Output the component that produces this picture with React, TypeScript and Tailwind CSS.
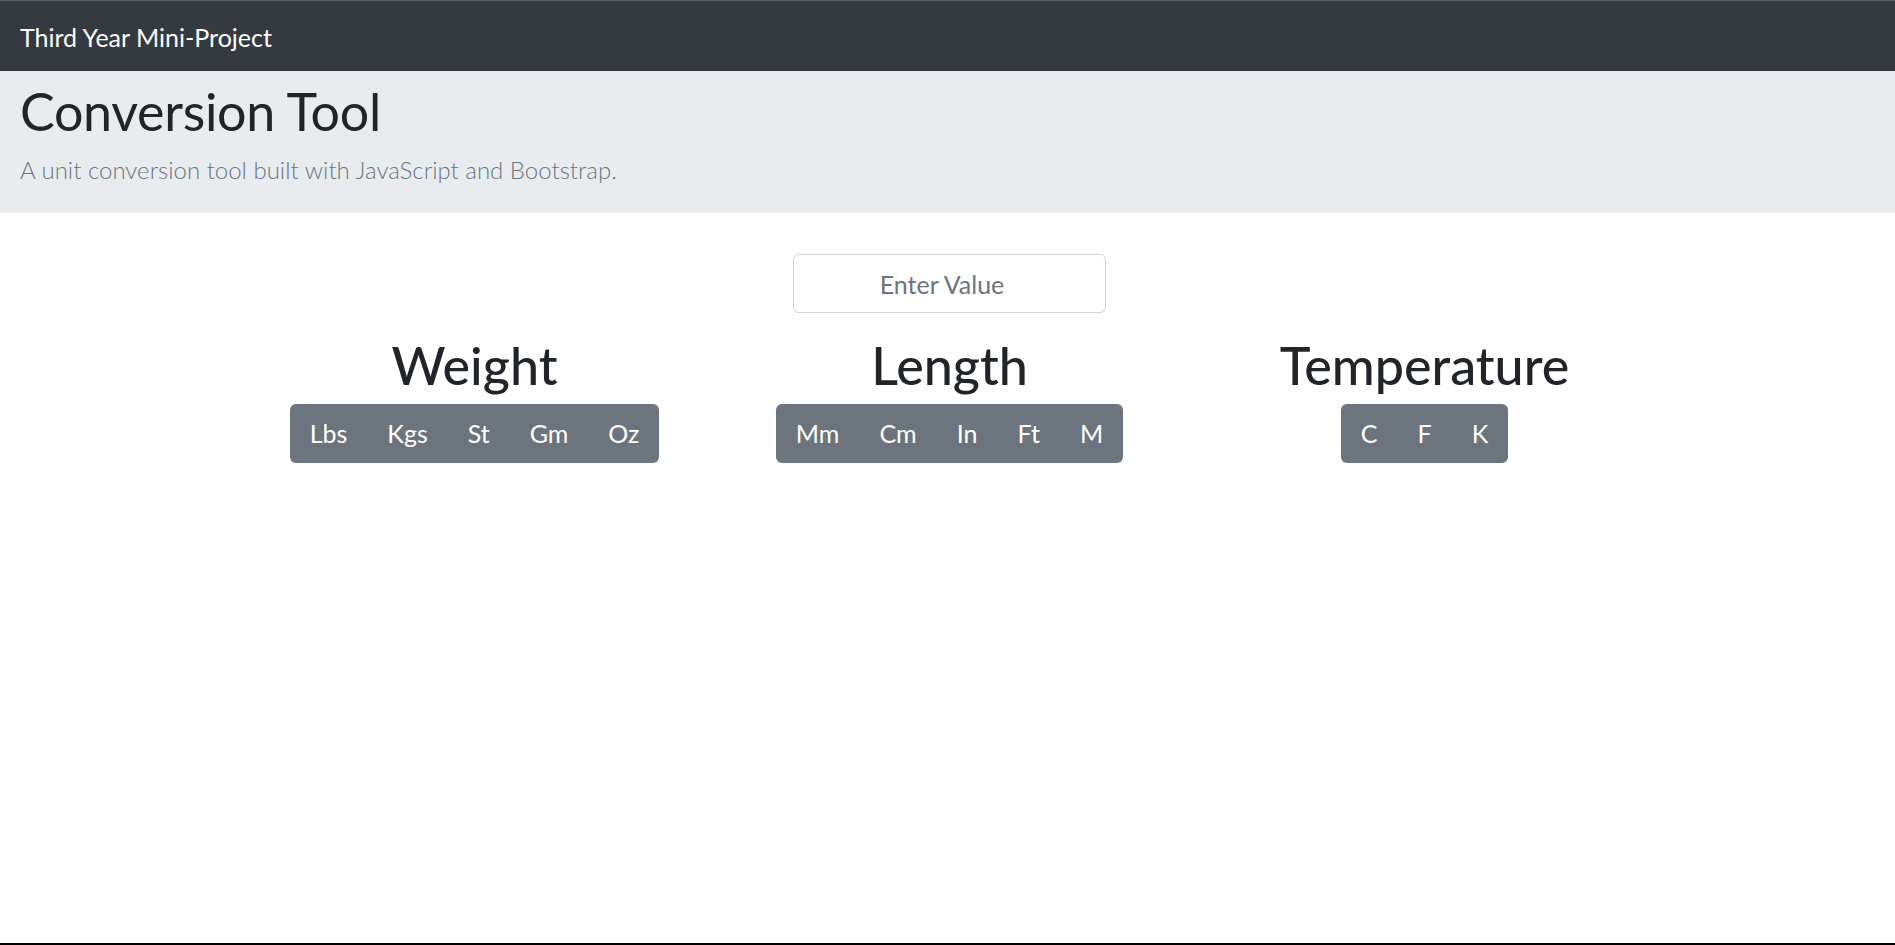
const weightUnits = ['Lbs', 'Kgs', 'St', 'Gm', 'Oz'];
const lengthUnits = ['Mm', 'Cm', 'In', 'Ft', 'M'];
const tempUnits = ['C', 'F', 'K'];

interface UnitGroupProps {
    title: string;
    units: string[];
}

function UnitGroup({ title, units }: UnitGroupProps) {
    return (
        <div className="flex flex-col items-center">
            <h1 className="text-[52px] leading-[1.2] font-medium text-[#212529] mb-[8px]">{title}</h1>
            <div className="flex rounded-[6px] overflow-hidden">
                {units.map((unit) => (
                    <button
                        key={unit}
                        className="h-[59px] px-[20px] flex items-center bg-[#6c757d] text-white text-[25px] leading-[1.5] cursor-pointer"
                    >
                        {unit}
                    </button>
                ))}
            </div>
        </div>
    );
}

export default function App() {
    return (
        <div className="h-[945px] flex flex-col bg-white font-['Lato',sans-serif]">
            {/* Navbar */}
            <nav className="h-[71px] shrink-0 flex items-center px-[20px] pt-[3px] bg-[#343a40] border-t border-[#575c62]">
                <span className="text-[25px] leading-[1.5] text-white">Third Year Mini-Project</span>
            </nav>

            {/* Jumbotron */}
            <header className="h-[142px] shrink-0 px-[20px] pt-[9px] bg-[#e9ecef]">
                <h1 className="text-[52px] leading-[1.2] tracking-[-0.3px] text-[#212529]">Conversion Tool</h1>
                <p className="mt-[10px] text-[24px] leading-[1.5] font-light text-[#6c757d]">
                    A unit conversion tool built with JavaScript and Bootstrap.
                </p>
            </header>

            {/* Converter */}
            <main className="flex-1 flex flex-col items-center pl-[4px]">
                <input
                    type="number"
                    placeholder="Enter Value"
                    className="mt-[41px] w-[313px] h-[59px] px-[20px] text-center text-[25px] text-[#495057] placeholder:text-[#6c757d] border border-[#ced4da] rounded-[6px] outline-none"
                />
                <div className="w-[1425px] mt-[21px] grid grid-cols-3">
                    <UnitGroup title="Weight" units={weightUnits} />
                    <UnitGroup title="Length" units={lengthUnits} />
                    <UnitGroup title="Temperature" units={tempUnits} />
                </div>
            </main>

            <div className="h-[2px] shrink-0 bg-black" />
        </div>
    );
}
